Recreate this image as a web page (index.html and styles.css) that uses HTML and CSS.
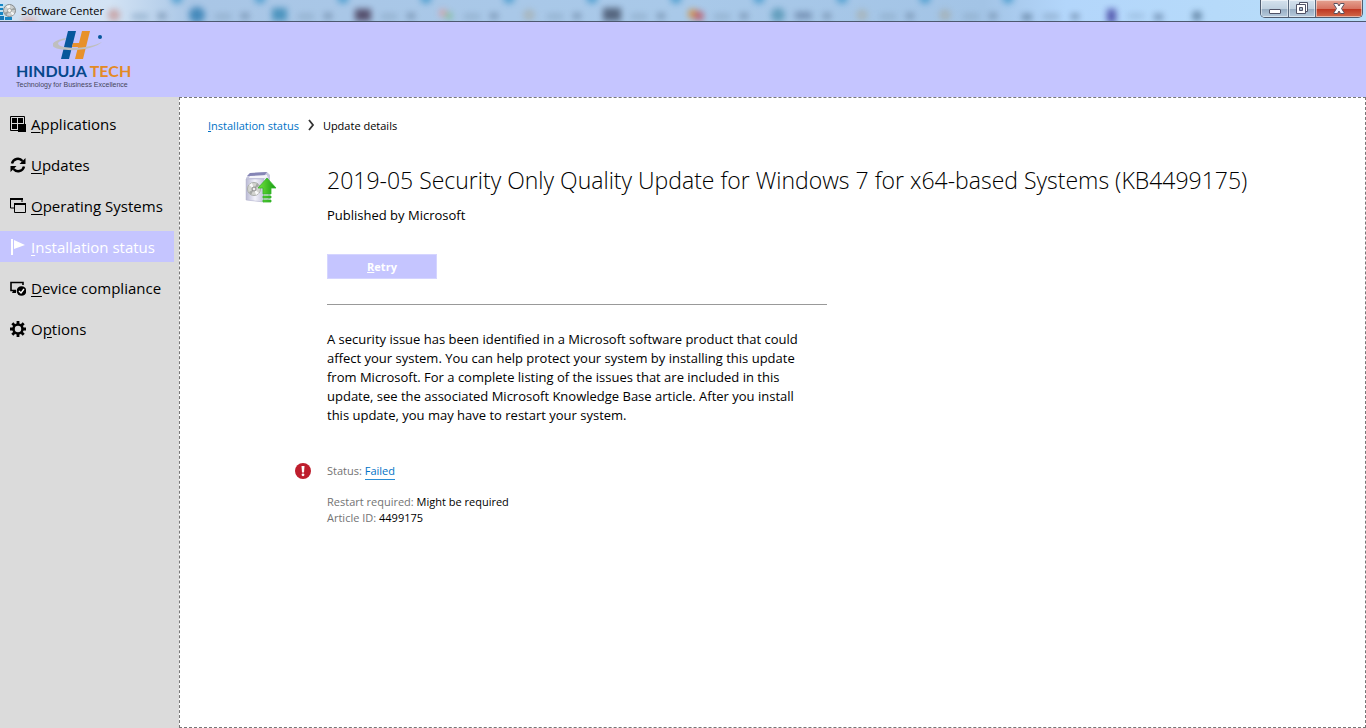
FILE: index.html
```html
<!DOCTYPE html>
<html lang="en">
<head>
<meta charset="utf-8">
<title>Software Center</title>
<link rel="stylesheet" href="styles.css">
</head>
<body>
<div class="window">
  <header class="titlebar">
    <svg class="glass" viewBox="0 0 1366 21" preserveAspectRatio="xMinYMin slice" aria-hidden="true">
      <defs>
        <filter id="soft" x="-5%" y="-80%" width="110%" height="260%" color-interpolation-filters="sRGB"><feGaussianBlur stdDeviation="3"/></filter>
        <linearGradient id="sky"><stop offset="0" stop-color="#cfe0f2"/><stop offset=".08" stop-color="#d3e3f4"/><stop offset=".14" stop-color="#a9c6e6"/><stop offset=".5" stop-color="#a9c9e9"/><stop offset=".72" stop-color="#a3c4e6"/><stop offset=".78" stop-color="#b3d6fb"/><stop offset="1" stop-color="#b9def9"/></linearGradient>
        <g id="tab"><circle cx="64" cy="-2" r="6" fill="#4f9fd0"/><rect x="19" y="14" width="16" height="5" fill="#8eacc9"/><rect x="45" y="13" width="8" height="6" fill="#7590ae"/></g>
      </defs>
      <rect width="1366" height="21" fill="url(#sky)"/>
      <g filter="url(#soft)" opacity=".85">
        <use href="#tab" x="113"/><use href="#tab" x="196"/><use href="#tab" x="279"/><use href="#tab" x="362"/><use href="#tab" x="445"/><use href="#tab" x="528"/><use href="#tab" x="612"/><use href="#tab" x="695"/><use href="#tab" x="778"/><use href="#tab" x="861"/><use href="#tab" x="944"/>
        <rect x="22" y="18" width="14" height="6" fill="#dfa19c"/>
        <circle cx="114" cy="15" r="6" fill="#c79c9c"/>
        <circle cx="197" cy="15" r="8" fill="#3580b4"/>
        <rect x="272" y="8" width="15" height="13" fill="#3d8cb8"/>
        <rect x="355" y="9" width="16" height="12" fill="#473b58"/>
        <circle cx="443" cy="13" r="4" fill="#dca0a4"/><circle cx="449" cy="16" r="4" fill="#83bf9d"/>
        <circle cx="529" cy="15" r="6" fill="#a8b4b8"/>
        <rect x="603" y="8" width="18" height="13" fill="#47556d"/>
        <circle cx="693" cy="14" r="5" fill="#d99035"/><circle cx="699" cy="16" r="5" fill="#bd5363"/>
        <circle cx="778" cy="15" r="7" fill="#5797b6"/>
        <rect x="795" y="12" width="16" height="7" fill="#6c87ab"/>
        <circle cx="862" cy="15" r="6" fill="#a8b4b8"/>
        <circle cx="945" cy="15" r="6" fill="#a5b1b5"/>
        <rect x="1022" y="14" width="10" height="6" fill="#617f9e"/><rect x="1043" y="14" width="16" height="5" fill="#8ca9c9"/><rect x="1071" y="14" width="8" height="5" fill="#647f9f"/>
        <rect x="1107" y="9" width="9" height="14" fill="#4444a3"/><rect x="1128" y="14" width="16" height="4" fill="#94b5d7"/><rect x="1154" y="14" width="9" height="6" fill="#6684a8"/>
        <circle cx="1197" cy="16" r="5" fill="#597b9b"/>
      </g>
    </svg>
    <svg class="app-icon" viewBox="0 0 16 20" aria-hidden="true">
      <path d="M0 3h8v16H0z" fill="#bfe0f1"/>
      <path d="M0 3h3v2H0zM0 7h3v2H0zM0 11h3v3H0zM5 16h7v3H5z" fill="#1685c4"/>
      <path d="M0 15h4v4H0z" fill="#1778b6"/>
      <circle cx="9.500" cy="9.500" r="6" fill="#ccd0d0" stroke="#85898b"/>
      <path d="M9.500 9.500 6 5l4-1zM9.500 9.500l5 3-2 2z" fill="#f6f7f6"/>
      <path d="M9.500 9.500 15 6l0 3zM9.500 9.500 4 12l2 3z" fill="#9fa4a3"/>
      <circle cx="9.500" cy="9.500" r="2" fill="#f2f2ed" stroke="#858783" stroke-width=".6"/>
    </svg>
    <span class="window-title">Software Center</span>
    <div class="window-controls">
      <button class="control" aria-label="Minimize"><svg viewBox="0 0 14 14"><rect x="1.500" y="7.500" width="11" height="4" rx=".5" fill="#fff" stroke="#505367"/></svg></button>
      <button class="control restore" aria-label="Restore"><svg viewBox="0 0 14 14"><path d="M4.500 .5h8v9h-8z" fill="#fff" stroke="#505367"/><path d="M1.500 2.500h9v9h-9z" fill="#fff" stroke="#505367"/><path d="M4.500 5.500h3v3h-3z" fill="#a9bccd" stroke="#505367"/></svg></button>
      <button class="control close" aria-label="Close"><svg viewBox="0 0 14 14"><path d="M2 1.500h3.500L7 4l1.500-2.500H12v1L9.500 6.500 12 10.500v1H8.500L7 9l-1.500 2.500H2v-1l2.500-4L2 2.500z" fill="#fff" stroke="#58515f"/></svg></button>
    </div>
  </header>

  <div class="banner">
    <div class="logo">
      <svg class="logo-mark" viewBox="0 0 50 32" aria-hidden="true">
        <path d="M15 1h8l-7 28H8z" fill="#07579c"/>
        <path d="M29 1h8l-7 28h-8l3-12h-6l1-4h6z" fill="#e7912b"/>
        <path d="M13 8C-3 11-4 17 6 19c15 3 36 0 43-7-9 5-27 7-38 5-9-2-7-6 1-7z" fill="#bfbfbe"/>
        <circle cx="47" cy="7" r="2" fill="#07579c"/>
      </svg>
      <div class="logo-name">HINDUJA <span class="logo-accent">TECH</span></div>
      <div class="logo-tagline">Technology for Business Excellence</div>
    </div>
  </div>

  <div class="body">
    <nav class="sidebar">
      <a class="nav-item" href="#"><svg class="nav-icon" viewBox="0 0 16 16"><path d="M.500.500h14v14H.500z" fill="none" stroke="#000"/><path d="M2 2h5v5H2zM8 2h5v5H8zM2 8h5v5H2zM8 8h8v8H8z"/></svg><span><u>A</u>pplications</span></a>
      <a class="nav-item" href="#"><svg class="nav-icon" viewBox="0 0 16 16"><path d="M2 6.500A6 6 0 0 1 12.500 4M14 9.500A6 6 0 0 1 3.500 12" fill="none" stroke="#000" stroke-width="2.400"/><path d="M15.500 1v6H9.500zM.500 15V9h6z"/></svg><span><u>U</u>pdates</span></a>
      <a class="nav-item" href="#"><svg class="nav-icon" viewBox="0 0 16 16"><path d="M4 10H.500V1H12v3" fill="none" stroke="#000"/><path d="M0 0h13v2H0zM4 5h12v2H4z"/><path d="M4.500 5.500h11v9h-11z" fill="none" stroke="#000"/></svg><span><u>O</u>perating Systems</span></a>
      <a class="nav-item selected" href="#" aria-current="page"><svg class="nav-icon" viewBox="0 0 16 16"><path d="M1 0h2v16H1zM4 1l11 5-11 4z" fill="#fff"/></svg><span><u>I</u>nstallation status</span></a>
      <a class="nav-item" href="#"><svg class="nav-icon" viewBox="0 0 16 16"><path d="M6 10.500H1v-8h12V5" fill="none" stroke="#000" stroke-width="1.600"/><path d="M3 11h3v2H2z"/><circle cx="11.500" cy="11" r="4.800"/><path d="m9 11 2 2 3-4" fill="none" stroke="#fff" stroke-width="1.400"/></svg><span><u>D</u>evice compliance</span></a>
      <a class="nav-item" href="#"><svg class="nav-icon" viewBox="0 0 16 16"><circle cx="8" cy="8" r="4.500" fill="none" stroke="#000" stroke-width="2.600"/><path d="M8 0v3M8 13v3M0 8h3M13 8h3M2.300 2.300l2.200 2.200M11.500 11.500l2.200 2.200M2.300 13.700l2.200-2.200M11.500 4.500l2.200-2.200" stroke="#000" stroke-width="2.800"/></svg><span>O<u>p</u>tions</span></a>
    </nav>

    <main class="content">
      <div class="breadcrumb">
        <a class="link" href="#"><u>I</u>nstallation status</a>
        <svg class="chevron" viewBox="0 0 8 12" aria-hidden="true"><path d="m2 1 4 5-4 5" fill="none" stroke="#333" stroke-width="1.800"/></svg>
        <span>Update details</span>
      </div>
      <div class="details">
        <svg class="update-icon" viewBox="0 0 32 32" aria-hidden="true">
          <defs><linearGradient id="box" x2="1"><stop stop-color="#b9b9d3"/><stop offset=".5" stop-color="#f3f3fb"/><stop offset="1" stop-color="#c2c2d8"/></linearGradient><linearGradient id="green" x2="1"><stop stop-color="#74e53d"/><stop offset="1" stop-color="#159b12"/></linearGradient></defs>
          <path d="m5 1 17-1 3 3v24l-7 3-17-2V6z" fill="#c8c8df"/>
          <path d="m5 1 17-1-3 4H2z" fill="#8585b5"/><path d="m5 4 17-1v3H4z" fill="#f5f5fa"/>
          <path d="M1 7h18v23L1 28z" fill="url(#box)" stroke="#b5b5cf" stroke-width=".5"/>
          <path d="m19 7 4-3v23l-4 3z" fill="#e5e5f2"/>
          <circle cx="9" cy="17" r="6.500" fill="#d3d4d0" stroke="#abaeaa"/><path d="m9 17-5-4 3-2zM9 17l5 4-3 2z" fill="#fafafa"/><path d="m9 17 3-6 2 3zM9 17l-3 6-2-3z" fill="#a5a8a5"/><circle cx="9" cy="17" r="2" fill="#eee" stroke="#888"/>
          <path d="m22 6 9 10h-5v6h-8v-6h-5zM18 24h8v2h-8zM18 28h8v2h-8z" fill="url(#green)" stroke="#35b52c" stroke-width=".8"/>
        </svg>
        <div class="info">
          <h1 class="title">2019-05 Security Only Quality Update for Windows 7 for x64-based Systems (KB4499175)</h1>
          <p class="publisher">Published by Microsoft</p>
          <button class="retry"><u>R</u>etry</button>
          <hr class="divider">
          <p class="description">A security issue has been identified in a Microsoft software product that could<br>affect your system. You can help protect your system by installing this update<br>from Microsoft. For a complete listing of the issues that are included in this<br>update, see the associated Microsoft Knowledge Base article. After you install<br>this update, you may have to restart your system.</p>
        </div>
        <svg class="error-icon" viewBox="0 0 16 16" role="img" aria-label="Error"><circle cx="8" cy="8" r="8" fill="#be1e2d"/><path d="M6.500 3h3L9 9.500H7z" fill="#fff"/><circle cx="8" cy="11.800" r="1.400" fill="#fff"/></svg>
        <div class="facts">
          <p class="status"><span class="label">Status:</span> <a class="link failed" href="#">Failed</a></p>
          <p><span class="label">Restart required:</span> Might be required</p>
          <p><span class="label">Article ID:</span> 4499175</p>
        </div>
      </div>
    </main>
  </div>
</div>
</body>
</html>
```

FILE: styles.css
```css
* { box-sizing: border-box; }
body { margin: 0; font-family: "Open Sans", "Noto Sans", sans-serif; color: #000; font-size: 11px; }
p, h1 { margin: 0; }
a { text-decoration: none; }
button { font-family: inherit; }
.window { display: flex; flex-direction: column; min-height: 100vh; }

.titlebar { position: relative; display: flex; align-items: center; height: 22px; border-bottom: 1px solid #4d5970; overflow: hidden; }
.glass { position: absolute; top: 0; left: 0; width: 100%; height: 100%; }
.app-icon { position: relative; width: 16px; height: 20px; }
.window-title { position: relative; margin-left: 5px; font-size: 11px; }
.window-controls { position: relative; display: flex; align-self: flex-start; height: 18px; margin: 0 3px 0 auto; border: 1px solid #4f5c70; border-top: 0; border-radius: 0 0 5px 5px; overflow: hidden; }
.control { display: flex; align-items: center; justify-content: center; width: 28px; padding: 0; border: 0; border-right: 1px solid #59697e; background: linear-gradient(#d5e2ee, #c0d1e0 50%, #96acc2 52%, #b7cbdd); box-shadow: inset 0 0 0 1px rgba(255,255,255,.5); }
.control svg { width: 14px; height: 14px; }
.restore { width: 27px; }
.close { width: 46px; border-right: 0; background: linear-gradient(#e5a392, #d77562 50%, #be3520 52%, #d16a4a); }

.banner { height: 75px; padding: 8px 16px; background: #c5c5ff; }
.logo { display: flex; flex-direction: column; width: max-content; }
.logo-mark { width: 50px; height: 32px; margin-left: 37px; }
.logo-name { color: #07488b; font-family: Lato, sans-serif; font-size: 16px; font-weight: 700; line-height: 18px; white-space: nowrap; }
.logo-accent { color: #e38a25; }
.logo-tagline { color: #45455c; font-family: "Liberation Sans", sans-serif; font-size: 7px; line-height: 9px; }

.body { display: flex; flex: 1; background: #dbdbdb; }
.sidebar { display: flex; flex-direction: column; gap: 10px; width: 179px; padding: 11px 5px 0 0; }
.nav-item { display: flex; align-items: center; gap: 5px; height: 31px; padding-left: 10px; color: #000; font-size: 15px; white-space: nowrap; }
.nav-icon { flex: none; width: 16px; height: 16px; }
.nav-item u { text-underline-offset: 2px; }
.selected { background: #c5c5ff; color: #fff; }

.content { flex: 1; padding: 19px 28px; border: 1px dashed #777; background: #fff; }
.breadcrumb { display: flex; align-items: center; gap: 8px; height: 16px; }
.link { color: #0072c6; }
.chevron { width: 8px; height: 12px; }
.details { display: grid; grid-template-columns: 50px 32px 1fr; padding: 31px 0 0 37px; }
.update-icon { grid-column: 1; width: 32px; height: 32px; margin-top: 8px; }
.info { grid-column: 3; }
.title { font-size: 23px; font-weight: 300; line-height: 32px; }
.publisher { margin-top: 10px; font-size: 13px; line-height: 18px; }
.retry { display: block; width: 110px; height: 25px; margin-top: 30px; padding: 0; border: 1px solid #d5d5ff; background: #c5c5ff; color: #fff; font-size: 11px; font-weight: 700; }
.divider { width: 500px; max-width: 100%; margin: 25px 0 25px; border: 0; border-top: 1px solid #999; }
.description { font-size: 13px; line-height: 19px; }
.error-icon { grid-column: 2; width: 16px; height: 16px; margin-top: 38px; }
.facts { grid-column: 3; margin-top: 38px; line-height: 16px; }
.status { margin-bottom: 14px; }
.label { color: #737373; }
.failed { display: inline-block; border-bottom: 1px solid #2a8dd4; }
```
